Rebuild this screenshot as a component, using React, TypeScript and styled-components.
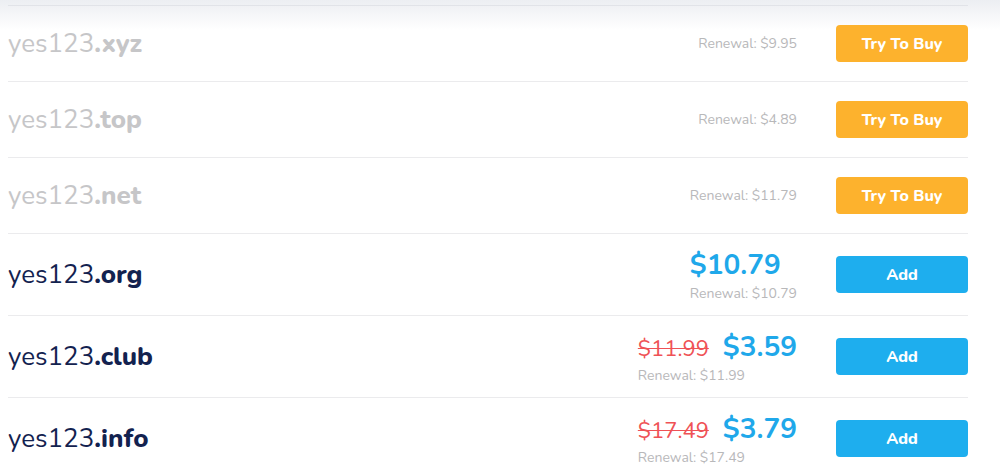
import { createGlobalStyle, styled, css } from 'styled-components';
import { FunctionComponent } from 'react';

const FONT = `'Nunito', 'Lato', 'Open Sans', sans-serif`;

const GlobalStyle = createGlobalStyle`
  html, body {
    margin: 0;
    padding: 0;
    background: #fff;
  }
  body {
    font-family: ${FONT};
    background: linear-gradient(#eceef2 0, #ffffff 30px) no-repeat;
    -webkit-font-smoothing: antialiased;
  }
`;

const Page = styled.div`
  padding: 5px 32px 0 8px;
`;

const List = styled.ul`
  list-style: none;
  margin: 0;
  padding: 0;
  border-top: 1px solid #e1e3e8;
`;

const Row = styled.li<{ $tall?: boolean }>`
  display: flex;
  align-items: center;
  justify-content: space-between;
  height: ${({ $tall }) => ($tall ? '81px' : '75px')};
  border-bottom: 1px solid #ebebed;
`;

const Domain = styled.div<{ $muted?: boolean }>`
  font-size: 26px;
  color: ${({ $muted }) => ($muted ? '#c6c6c8' : '#13224f')};
  b {
    font-weight: 800;
  }
`;

const Right = styled.div`
  display: flex;
  align-items: center;
  gap: 39px;
`;

const Renewal = styled.div`
  font-size: 14px;
  color: #b8b8ba;
`;

const PriceBlock = styled.div`
  display: flex;
  flex-direction: column;
  align-items: flex-start;
  padding-bottom: 2px;
`;

const PriceLine = styled.div`
  display: flex;
  align-items: baseline;
  gap: 14px;
  margin-top: 2px;
`;

const OldPrice = styled.span`
  font-size: 22px;
  color: #ef5256;
  text-decoration: line-through;
  text-decoration-thickness: 1px;
`;

const Price = styled.span`
  font-size: 28px;
  font-weight: 700;
  color: #1fa8ea;
`;

const Button = styled.button<{ $variant: 'buy' | 'add' }>`
  width: 132px;
  height: 37px;
  border: 0;
  border-radius: 4px;
  font-family: ${FONT};
  font-size: 16px;
  font-weight: 800;
  color: #fff;
  cursor: pointer;
  ${({ $variant }) =>
    $variant === 'buy'
      ? css`
          background: #fdb22d;
        `
      : css`
          background: #1eaeee;
        `}
`;

type Item = {
  name: string;
  tld: string;
  renewal: string;
  price?: string;
  old?: string;
};

const items: Item[] = [
  { name: 'yes123', tld: '.xyz', renewal: '$9.95' },
  { name: 'yes123', tld: '.top', renewal: '$4.89' },
  { name: 'yes123', tld: '.net', renewal: '$11.79' },
  { name: 'yes123', tld: '.org', renewal: '$10.79', price: '$10.79' },
  { name: 'yes123', tld: '.club', renewal: '$11.99', price: '$3.59', old: '$11.99' },
  { name: 'yes123', tld: '.info', renewal: '$17.49', price: '$3.79', old: '$17.49' },
];

const App: FunctionComponent = () => {
  return (
    <Page>
      <GlobalStyle />
      <List>
        {items.map((item) => (
          <Row key={item.tld} $tall={!!item.price}>
            <Domain $muted={!item.price}>
              {item.name}
              <b>{item.tld}</b>
            </Domain>
            <Right>
              {item.price ? (
                <PriceBlock>
                  <PriceLine>
                    {item.old && <OldPrice>{item.old}</OldPrice>}
                    <Price>{item.price}</Price>
                  </PriceLine>
                  <Renewal>Renewal: {item.renewal}</Renewal>
                </PriceBlock>
              ) : (
                <Renewal>Renewal: {item.renewal}</Renewal>
              )}
              <Button $variant={item.price ? 'add' : 'buy'}>
                {item.price ? 'Add' : 'Try To Buy'}
              </Button>
            </Right>
          </Row>
        ))}
      </List>
    </Page>
  );
};

export default App;
